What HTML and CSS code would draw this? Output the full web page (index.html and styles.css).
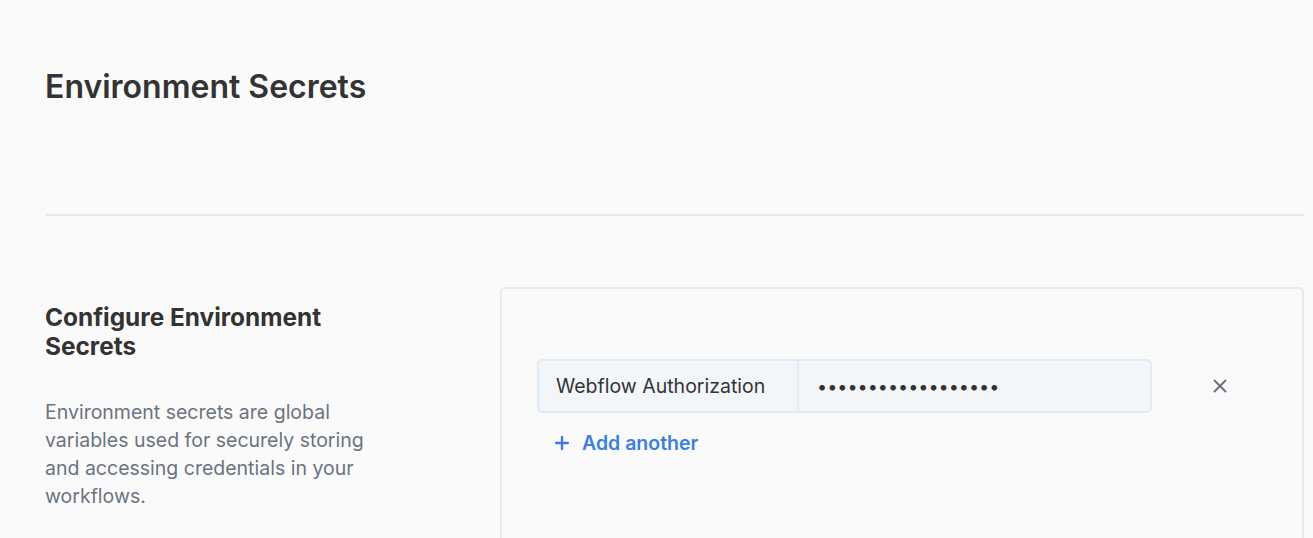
FILE: index.html
```html
<!DOCTYPE html>
<html>
<head>
<meta charset="utf-8">
<link rel="stylesheet" href="styles.css">
</head>
<body>
<div class="page">
  <header class="page-header">
    <h1 class="page-title">Environment Secrets</h1>
  </header>
  <div class="divider"></div>
  <section class="section">
    <div class="section-info">
      <h2 class="section-title">Configure Environment Secrets</h2>
      <p class="section-desc">Environment secrets are global variables used for securely storing and accessing credentials in your workflows.</p>
    </div>
    <div class="card">
      <div class="secret-row">
        <div class="secret-field">
          <div class="secret-name">Webflow Authorization</div>
          <div class="secret-value">••••••••••••••••••</div>
        </div>
        <button class="remove-btn" aria-label="Remove">
          <svg width="14" height="14" viewBox="0 0 14 14"><path d="M1.5 1.5 L12.5 12.5 M12.5 1.5 L1.5 12.5" stroke="#6b7380" stroke-width="2" stroke-linecap="round"/></svg>
        </button>
      </div>
      <button class="add-btn">
        <svg width="14" height="14" viewBox="0 0 14 14"><path d="M7 1 V13 M1 7 H13" stroke="#3a7fe0" stroke-width="2.4" stroke-linecap="round"/></svg>
        <span>Add another</span>
      </button>
    </div>
  </section>
</div>
</body>
</html>
```

FILE: styles.css
```css
html, body {
  margin: 0;
  padding: 0;
  background: #fafafa;
  font-family: Inter, "Noto Sans", sans-serif;
  color: #333333;
}
.page {
  padding: 0 9px 0 45px;
}
.page-header {
  height: 214px;
  display: flex;
  align-items: flex-start;
}
.page-title {
  margin: 0;
  margin-top: 67px;
  font-size: 32px;
  line-height: 40px;
  font-weight: 600;
  color: #333333;
}
.divider {
  height: 2px;
  background: #e6e9ec;
}
.section {
  display: flex;
  margin-top: 71px;
}
.section-info {
  width: 340px;
  flex: none;
  margin-right: 115px;
  padding-top: 16px;
}
.section-title {
  margin: 0;
  font-size: 24.4px;
  line-height: 29px;
  font-weight: 700;
  color: #333333;
  width: 300px;
}
.section-desc {
  margin: 37px 0 0;
  font-size: 19.5px;
  line-height: 28px;
  color: #6b7380;
}
.card {
  flex: 1;
  height: 249px;
  border: 2px solid #e6eaee;
  border-bottom: none;
  border-radius: 5px 5px 0 0;
  padding: 70px 0 0 35px;
}
.secret-row {
  display: flex;
  align-items: center;
}
.secret-field {
  width: 615px;
  height: 54px;
  box-sizing: border-box;
  display: flex;
  border: 2px solid #e1ebf7;
  border-radius: 5px;
  background: #f3f6f9;
}
.secret-name {
  width: 260px;
  flex: none;
  box-sizing: border-box;
  border-right: 2px solid #e1ebf7;
  padding-left: 17px;
  display: flex;
  align-items: center;
  font-size: 19.5px;
  color: #333333;
}
.secret-value {
  padding-left: 18px;
  display: flex;
  align-items: center;
  font-size: 18px;
  color: #333333;
}
.remove-btn {
  margin-left: 60px;
  width: 16px;
  height: 16px;
  padding: 0;
  border: none;
  background: none;
  display: flex;
  align-items: center;
  justify-content: center;
}
.add-btn {
  margin-top: 18px;
  margin-left: 18px;
  padding: 0;
  border: none;
  background: none;
  display: flex;
  align-items: center;
  gap: 13px;
  font-family: Inter, "Noto Sans", sans-serif;
  font-size: 19.5px;
  font-weight: 600;
  color: #3a7fe0;
}
```
